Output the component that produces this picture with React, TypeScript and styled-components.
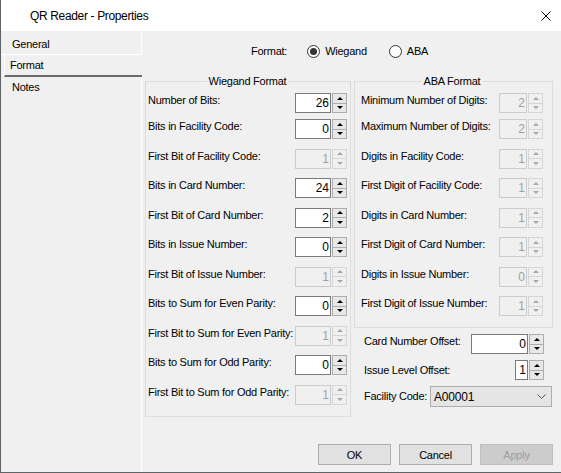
import styled, { createGlobalStyle } from 'styled-components';

const GlobalStyle = createGlobalStyle`
    html, body {
        margin: 0;
        padding: 0;
        background: #ffffff;
    }
    body {
        font-family: "Liberation Sans", Arial, sans-serif;
        font-size: 11px;
        letter-spacing: -0.25px;
        color: #000;
    }
    * {
        box-sizing: border-box;
    }
`

interface IRow {
    label: string
    value: number
    disabled?: boolean
}

const wiegandRows: IRow[] = [
    { label: 'Number of Bits:', value: 26 },
    { label: 'Bits in Facility Code:', value: 0 },
    { label: 'First Bit of Facility Code:', value: 1, disabled: true },
    { label: 'Bits in Card Number:', value: 24 },
    { label: 'First Bit of Card Number:', value: 2 },
    { label: 'Bits in Issue Number:', value: 0 },
    { label: 'First Bit of Issue Number:', value: 1, disabled: true },
    { label: 'Bits to Sum for Even Parity:', value: 0 },
    { label: 'First Bit to Sum for Even Parity:', value: 1, disabled: true },
    { label: 'Bits to Sum for Odd Parity:', value: 0 },
    { label: 'First Bit to Sum for Odd Parity:', value: 1, disabled: true },
]

const abaRows: IRow[] = [
    { label: 'Minimum Number of Digits:', value: 2, disabled: true },
    { label: 'Maximum Number of Digits:', value: 2, disabled: true },
    { label: 'Digits in Facility Code:', value: 1, disabled: true },
    { label: 'First Digit of Facility Code:', value: 1, disabled: true },
    { label: 'Digits in Card Number:', value: 1, disabled: true },
    { label: 'First Digit of Card Number:', value: 1, disabled: true },
    { label: 'Digits in Issue Number:', value: 0, disabled: true },
    { label: 'First Digit of Issue Number:', value: 1, disabled: true },
]

const tabs = ['General', 'Format', 'Notes']

interface SpinnerProps {
    value: number
    width: number
    disabled?: boolean
}

const Spinner = ({ value, width, disabled }: SpinnerProps) => (
    <SpinBox $w={width}>
        <SpinField $off={disabled}>{value}</SpinField>
        <SpinButtons>
            <SpinButton $off={disabled}><Arrow $off={disabled} $dir="up" /></SpinButton>
            <SpinButton $off={disabled}><Arrow $off={disabled} $dir="down" /></SpinButton>
        </SpinButtons>
    </SpinBox>
)

const App = () => {
    return (
        <>
            <GlobalStyle />
            <Window>
                <TitleBar>
                    <span>QR Reader - Properties</span>
                    <svg width="10" height="10" viewBox="0 0 10 10">
                        <path d="M0.5 0.5 L9.5 9.5 M9.5 0.5 L0.5 9.5" stroke="#000" strokeWidth="1" fill="none" />
                    </svg>
                </TitleBar>
                <Body>
                    <TabList>
                        {tabs.map((tab) => (
                            <Tab key={tab} $active={tab === 'Format'} $first={tab === 'General'}>
                                {tab}
                            </Tab>
                        ))}
                    </TabList>
                    <Page>
                        <FormatRow>
                            <span>Format:</span>
                            <Radio $gap={20}>
                                <RadioCircle $on />
                                Wiegand
                            </Radio>
                            <Radio $gap={22}>
                                <RadioCircle />
                                ABA
                            </Radio>
                        </FormatRow>
                        <Columns>
                            <Group $w={206} $pad="6px 3px 11px 2px">
                                <Legend>Wiegand Format</Legend>
                                <RowStack>
                                    {wiegandRows.map((row) => (
                                        <Row key={row.label}>
                                            <Label>{row.label}</Label>
                                            <Spinner value={row.value} width={52} disabled={row.disabled} />
                                        </Row>
                                    ))}
                                </RowStack>
                            </Group>
                            <RightColumn>
                                <Group $w={199} $pad="6px 9px 11px 6px">
                                    <Legend>ABA Format</Legend>
                                    <RowStack>
                                        {abaRows.map((row) => (
                                            <Row key={row.label}>
                                                <Label>{row.label}</Label>
                                                <Spinner value={row.value} width={44} disabled={row.disabled} />
                                            </Row>
                                        ))}
                                    </RowStack>
                                </Group>
                                <Extras>
                                    <ExtraRow $gap={6}>
                                        <Label>Card Number Offset:</Label>
                                        <Spinner value={0} width={73} />
                                    </ExtraRow>
                                    <ExtraRow $gap={6} $center>
                                        <Label>Issue Level Offset:</Label>
                                        <Spinner value={1} width={29} />
                                    </ExtraRow>
                                    <ExtraRow $gap={6} $center>
                                        <Label>Facility Code:</Label>
                                        <Combo>
                                            <span>A00001</span>
                                            <svg width="9" height="5" viewBox="0 0 9 5">
                                                <polyline points="0.5,0.5 4.5,4.5 8.5,0.5" stroke="#4d4d4d" strokeWidth="1" fill="none" />
                                            </svg>
                                        </Combo>
                                    </ExtraRow>
                                </Extras>
                            </RightColumn>
                        </Columns>
                        <ButtonRow>
                            <Button>OK</Button>
                            <Button>Cancel</Button>
                            <Button disabled>Apply</Button>
                        </ButtonRow>
                    </Page>
                </Body>
            </Window>
        </>
    )
}

const Window = styled.div`
    width: 561px;
    height: 473px;
    display: flex;
    flex-direction: column;
    border-left: 1px solid #5d6466;
    border-bottom: 1px solid #5d6466;
    overflow: hidden;
`

const TitleBar = styled.div`
    height: 31px;
    flex-shrink: 0;
    background: #ffffff;
    display: flex;
    align-items: center;
    justify-content: space-between;
    padding: 0 10px 0 29px;
    font-size: 12px;
    letter-spacing: -0.35px;
`

const Body = styled.div`
    flex: 1;
    min-height: 0;
    display: flex;
    background: #f0f0f0;
`

const TabList = styled.div`
    width: 141px;
    flex-shrink: 0;
    padding-top: 3px;
    border-right: 1px solid #ffffff;
`

interface TabProps {
    $active?: boolean
    $first?: boolean
}

const Tab = styled.div<TabProps>`
    height: 20px;
    line-height: 20px;
    padding-left: 11px;
    background: #f0f0f0;

    ${({ $first }) => $first && `
        height: 21px;
        border-bottom: 1px solid #ffffff;
    `}

    ${({ $active }) => $active && `
        height: 22px;
        margin-left: 3px;
        margin-right: -1px;
        padding-left: 5px;
        border-left: 1px solid #ffffff;
        border-bottom: 2px solid #6b6b6b;
    `}
`

const Page = styled.div`
    flex: 1;
    min-width: 0;
    display: flex;
    flex-direction: column;
    padding: 13px 8px 7px 3px;
`

const FormatRow = styled.div`
    height: 14px;
    display: flex;
    align-items: center;
    padding-left: 106px;
`

const Radio = styled.span<{ $gap: number }>`
    display: inline-flex;
    align-items: center;
    gap: 5px;
    margin-left: ${({ $gap }) => $gap}px;
`

const RadioCircle = styled.span<{ $on?: boolean }>`
    width: 13px;
    height: 13px;
    border-radius: 50%;
    border: 1px solid #333333;
    background: #ffffff;
    display: inline-flex;
    align-items: center;
    justify-content: center;

    &::after {
        content: '';
        width: 7px;
        height: 7px;
        border-radius: 50%;
        background: #333333;
        display: ${({ $on }) => ($on ? 'block' : 'none')};
    }
`

const Columns = styled.div`
    display: flex;
    align-items: flex-start;
    gap: 3px;
    margin-top: 17px;
`

const Group = styled.fieldset<{ $w: number; $pad: string }>`
    width: ${({ $w }) => $w}px;
    min-width: 0;
    margin: 0;
    padding: ${({ $pad }) => $pad};
    border: 1px solid #dcdcdc;
`

const Legend = styled.legend`
    margin: 0 auto;
    padding: 0 2px;
    line-height: 12px;
`

const RowStack = styled.div`
    display: flex;
    flex-direction: column;
    gap: 9.5px;

    & > :first-child {
        margin-bottom: -3.5px;
    }
`

const Row = styled.div`
    height: 20px;
    display: flex;
    justify-content: space-between;
    align-items: flex-start;
`

const Label = styled.span`
    padding-top: 1px;
    line-height: 13px;
    white-space: nowrap;
`

const RightColumn = styled.div`
    display: flex;
    flex-direction: column;
`

const Extras = styled.div`
    display: flex;
    flex-direction: column;
    padding: 0 9px 0 10px;
`

const ExtraRow = styled.div<{ $gap: number; $center?: boolean }>`
    display: flex;
    justify-content: space-between;
    align-items: ${({ $center }) => ($center ? 'center' : 'flex-start')};
    margin-top: ${({ $gap }) => $gap}px;

    ${({ $center }) => $center && `
        & > span {
            padding-top: 0;
        }
    `}
`

const SpinBox = styled.div<{ $w: number }>`
    display: flex;
    width: ${({ $w }) => $w}px;
    height: 20px;
    flex-shrink: 0;
`

const SpinField = styled.div<{ $off?: boolean }>`
    flex: 1;
    min-width: 0;
    border: 1px solid ${({ $off }) => ($off ? '#cccccc' : '#7a7a7a')};
    background: ${({ $off }) => ($off ? '#f0f0f0' : '#ffffff')};
    color: ${({ $off }) => ($off ? '#a0a0a0' : '#000000')};
    text-align: right;
    padding-right: 1px;
    line-height: 18px;
    font-size: 12px;
    letter-spacing: 0;
`

const SpinButtons = styled.div`
    width: 16px;
    flex-shrink: 0;
    display: flex;
    flex-direction: column;
    padding-left: 1px;
`

const SpinButton = styled.div<{ $off?: boolean }>`
    flex: 1;
    display: flex;
    align-items: center;
    justify-content: center;
    border: 1px solid ${({ $off }) => ($off ? '#d6d6d6' : '#adadad')};
    background: ${({ $off }) => ($off ? '#f0f0f0' : '#e8e8e8')};

    & + & {
        border-top: none;
    }
`

const Arrow = styled.span<{ $off?: boolean; $dir: 'up' | 'down' }>`
    width: 0;
    height: 0;
    border-left: 3.5px solid transparent;
    border-right: 3.5px solid transparent;
    ${({ $dir, $off }) => $dir === 'up'
        ? `border-bottom: 3.5px solid ${$off ? '#a8a8a8' : '#000000'};`
        : `border-top: 3.5px solid ${$off ? '#a8a8a8' : '#000000'};`}
`

const Combo = styled.div`
    width: 122px;
    height: 21px;
    margin-right: -8px;
    display: flex;
    align-items: center;
    justify-content: space-between;
    padding: 0 5px 0 3px;
    border: 1px solid #adadad;
    background: #e5e5e5;
    font-size: 12px;
    letter-spacing: -0.2px;
`

const ButtonRow = styled.div`
    margin-top: auto;
    display: flex;
    justify-content: flex-end;
    gap: 8px;
`

const Button = styled.button`
    width: 73px;
    height: 21px;
    padding: 0;
    font-family: "Liberation Sans", Arial, sans-serif;
    font-size: 11px;
    letter-spacing: -0.25px;
    color: #000000;
    background: #e1e1e1;
    border: 1px solid #adadad;

    &:disabled {
        color: #9d9d9d;
        background: #cccccc;
        border-color: #bfbfbf;
    }
`

export default App
